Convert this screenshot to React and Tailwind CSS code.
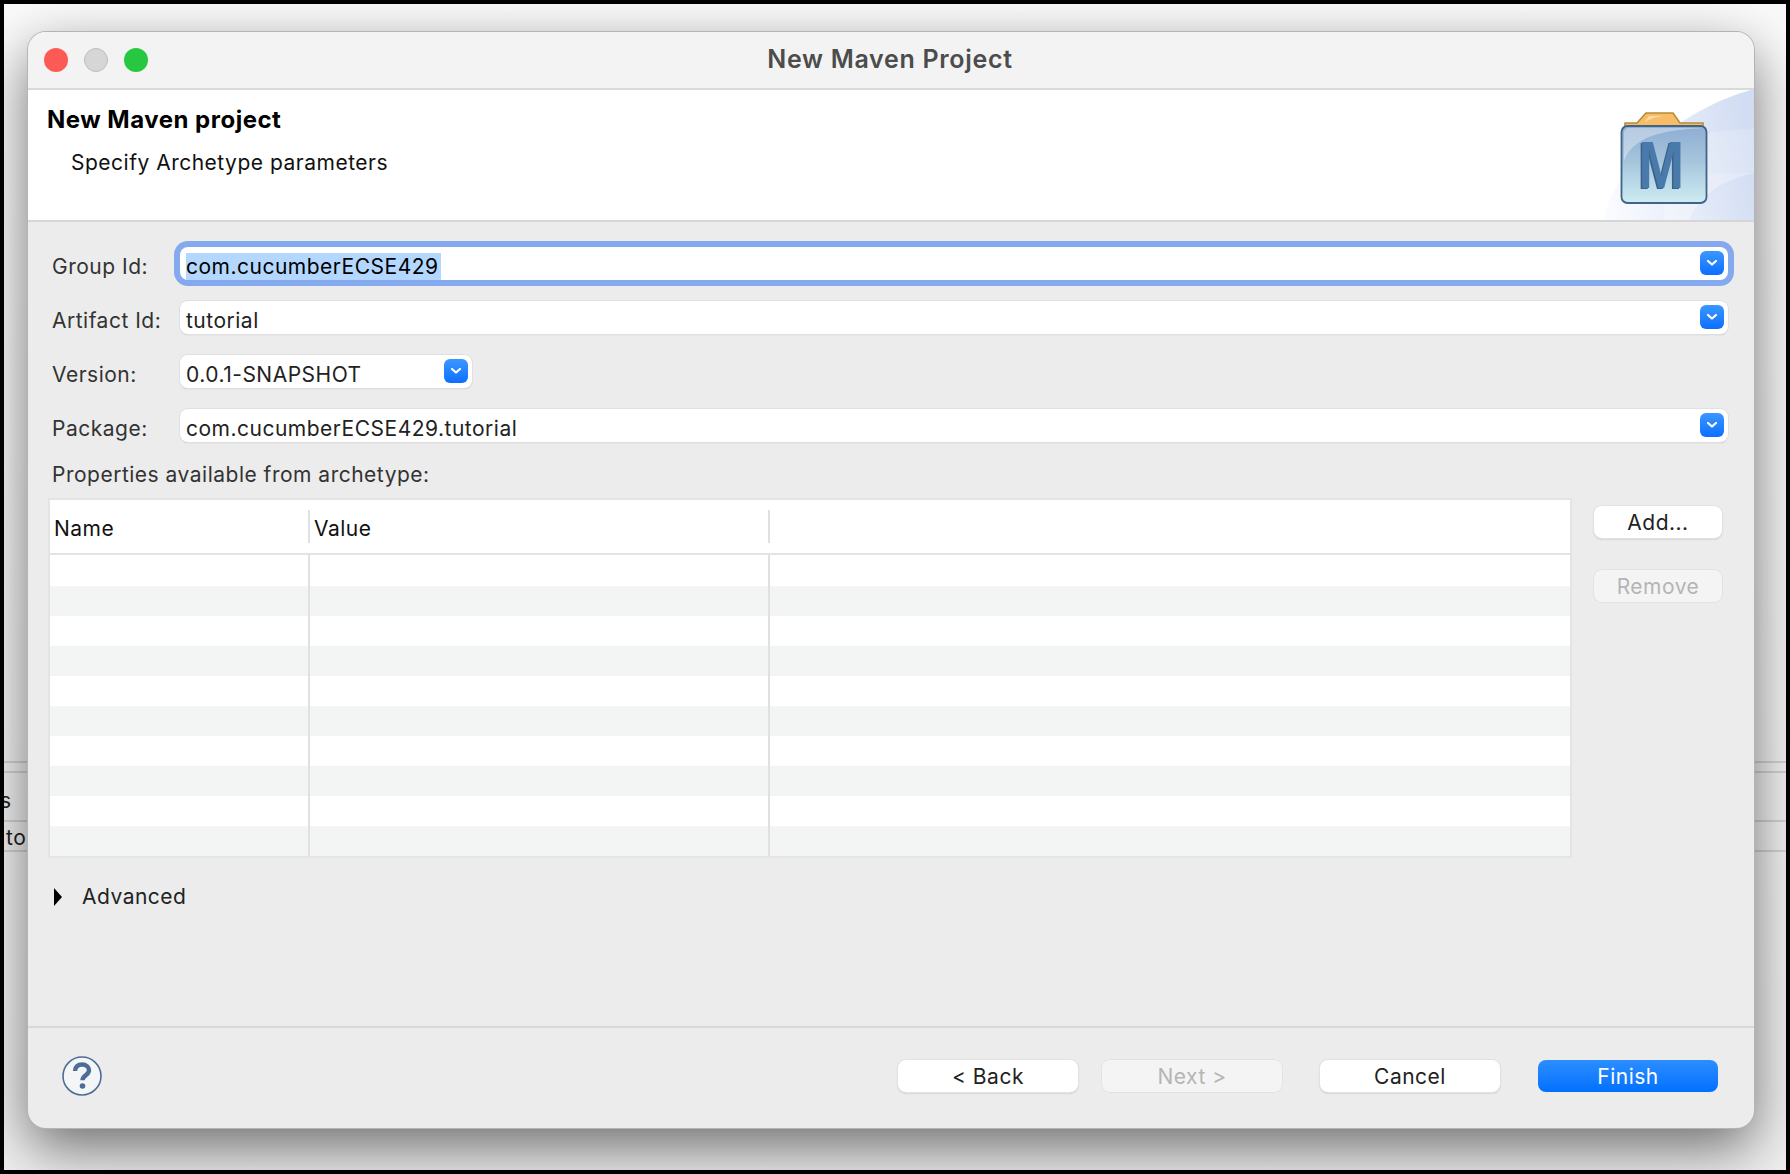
import React from "react";

const uiFont = "[font-family:Inter,'Noto_Sans',sans-serif]";

function Chevron() {
  return (
    <span className="flex h-6 w-6 shrink-0 items-center justify-center rounded-[6px] bg-gradient-to-b from-[#3a97ff] to-[#0a6eff]">
      <svg width="12" height="8" viewBox="0 0 12 8" fill="none">
        <path d="M2 2l4 3.5L10 2" stroke="#fff" strokeWidth="2.2" strokeLinecap="round" strokeLinejoin="round" />
      </svg>
    </span>
  );
}

function Combo({ value, focused, className = "" }) {
  return (
    <div
      className={`flex h-[33px] items-center justify-between rounded-[8px] bg-white pl-[6px] pr-1 ${
        focused
          ? "shadow-[0_0_0_6px_#84a9ee]"
          : "shadow-[0_0_0_1px_#e0e0e0,0_1px_1px_#b0b0b0]"
      } ${className}`}
    >
      <span className="relative top-[3px] text-[21px] leading-[27px] text-[#222]">
        {focused ? <span className="inline-block bg-[#b3d7ff] pr-[2px] text-black">{value}</span> : value}
      </span>
      <Chevron />
    </div>
  );
}

function FormRow({ label, children }) {
  return (
    <div className="flex h-[54px] items-center">
      <div className="relative top-[4px] w-[128px] shrink-0 text-[21px] text-[#333]">{label}</div>
      <div className="w-[1548px]">{children}</div>
    </div>
  );
}

function Button({ children, disabled, primary, className = "" }) {
  let look = "bg-white text-[#222] shadow-[0_0_0_1px_#e2e2e2,0_1px_2px_#aaa]";
  if (disabled) look = "bg-[#f4f4f4] text-[#b5b5b5] shadow-[0_0_0_1px_#e2e2e2]";
  if (primary) look = "bg-gradient-to-b from-[#2a8eff] to-[#0070ff] text-white";
  return (
    <div className={`flex items-center justify-center rounded-[8px] text-[21px] leading-none ${look} ${className}`}>
      {children}
    </div>
  );
}

function MavenLogo() {
  return (
    <svg width="90" height="96" viewBox="0 0 90 96">
      <defs>
        <linearGradient id="body" x1="0" y1="0" x2="0" y2="1">
          <stop offset="0" stopColor="#8fadd3" />
          <stop offset="0.45" stopColor="#a5c4dc" />
          <stop offset="1" stopColor="#cdecf2" />
        </linearGradient>
      </defs>
      <path d="M5 16V12H17L26 2H53L60 12H83V16Z" fill="#f6bd66" stroke="#b98a36" strokeWidth="1.6" />
      <path d="M24 12l5-7h14c-8 1-14 3-19 7Z" fill="#fbdca8" />
      <rect x="1.5" y="15" width="85" height="77" rx="6" fill="url(#body)" stroke="#3f6488" strokeWidth="1.8" />
      <path d="M4 50V22c0-3 2-5 5-5h74c-30 2-68 4-79 33Z" fill="#fff" opacity="0.35" />
      <text x="17" y="78" textLength="46" lengthAdjust="spacingAndGlyphs" fontFamily="Liberation Sans" fontWeight="700" fontSize="66" fill="#3c6288">M</text>
      <text x="18.500" y="77" textLength="46" lengthAdjust="spacingAndGlyphs" fontFamily="Liberation Sans" fontWeight="700" fontSize="66" fill="#4a79ab">M</text>
    </svg>
  );
}

function Swoosh() {
  return (
    <svg className="absolute bottom-0 right-0" width="150" height="131" viewBox="0 0 150 131">
      <defs>
        <linearGradient id="sw" x1="0" y1="0.7" x2="1" y2="0.5">
          <stop offset="0" stopColor="#fafbff" />
          <stop offset="1" stopColor="#d2ddf3" />
        </linearGradient>
      </defs>
      <path d="M0 131C6 85 70 22 150 0V131Z" fill="url(#sw)" />
      <path d="M66 52C90 45 120 41 150 40V84C125 84 100 84 62 86Z" fill="#fff" opacity="0.18" />
      <path d="M62 86C95 84 125 84 150 84C125 90 100 100 85 131H60Z" fill="#fff" opacity="0.3" />
    </svg>
  );
}

function HelpIcon() {
  return (
    <svg width="40" height="40" viewBox="0 0 40 40" fill="none">
      <circle cx="20" cy="20" r="19" fill="#f3f5f7" stroke="#4f6d94" strokeWidth="1.6" />
      <path d="M13 15c0-4 3-6.500 7-6.500s7 2.300 7 5.800c0 5-6.500 5-6.500 10" stroke="#4f6d94" strokeWidth="4.400" />
      <circle cx="20.500" cy="30" r="2.800" fill="#4f6d94" />
    </svg>
  );
}

export default function App() {
  const rows = [31, 30, 30, 30, 30, 30, 30, 30, 30, 30];

  return (
    <div className={`relative h-[1174px] w-[1790px] overflow-hidden border-4 border-black bg-gradient-to-b from-[#fafafa] to-[#f0f0f0] tracking-[0.5px] ${uiFont}`}>
      {/* app behind the dialog, only the edges show */}
      <div className="absolute inset-x-0 top-[757px] h-[10px] border-t-2 border-[#d4d4d4]" />
      <div className="absolute inset-x-0 top-[767px] h-[49px] border-t-2 border-[#d4d4d4] text-[21px] leading-[56px] text-[#222]">
        <span className="relative -left-[4px]">s</span>
      </div>
      <div className="absolute inset-x-0 top-[816px] h-[32px] border-y-2 border-[#d4d4d4] text-[21px] leading-[32px] text-[#222]">
        <span className="ml-[2px]">to</span>
      </div>

      <div className="relative ml-[24px] mt-[28px] flex h-[1096px] w-[1726px] flex-col overflow-hidden rounded-[18px] bg-[#ececec] shadow-[0_0_0_1px_#b4b4b4,0_20px_56px_rgba(0,0,0,0.55)]">
        <div className="flex h-[58px] shrink-0 items-center border-b-2 border-[#d9d9d9] bg-[#f3f3f3]">
          <div className="ml-[16px] flex gap-4">
            <span className="h-6 w-6 rounded-full bg-[#fc5b55]" />
            <span className="h-6 w-6 rounded-full border border-[#bdbdbd] bg-[#d6d6d6]" />
            <span className="h-6 w-6 rounded-full bg-[#27c83f]" />
          </div>
          <div className="flex-1 pr-[122px] text-center text-[25px] font-semibold tracking-[0.7px] text-[#4c4c4c]">New Maven Project</div>
        </div>

        <div className="relative flex h-[132px] shrink-0 border-b-2 border-[#d6d6d6] bg-white">
          <Swoosh />
          <div className="flex-1 pl-[19px] pt-[15px]">
            <div className="text-[24px] font-bold leading-[30px] text-black">New Maven project</div>
            <div className="ml-[24px] mt-[13px] text-[21px] leading-[30px] text-[#111]">Specify Archetype parameters</div>
          </div>
          <div className="relative mr-[44px] mt-[21px] h-[96px] w-[90px]">
            <MavenLogo />
          </div>
        </div>

        <div className="flex flex-1 flex-col pl-[24px]">
          <div className="mt-[14px]">
            <FormRow label="Group Id:">
              <Combo value="com.cucumberECSE429" focused />
            </FormRow>
            <FormRow label="Artifact Id:">
              <Combo value="tutorial" />
            </FormRow>
            <FormRow label="Version:">
              <Combo value="0.0.1-SNAPSHOT" className="w-[292px]" />
            </FormRow>
            <FormRow label="Package:">
              <Combo value="com.cucumberECSE429.tutorial" />
            </FormRow>
          </div>

          <div className="mt-[8px] text-[21px] leading-[30px] text-[#333]">Properties available from archetype:</div>

          <div className="mt-[8px] flex items-start">
            <div className="-ml-[4px] w-[1524px] border-2 border-[#e4e4e4] bg-white">
              <div className="flex h-[55px] border-b-2 border-[#e4e4e4] text-[21px] text-[#111]">
                <div className="flex w-[258px] items-center pl-[4px]">
                  <span className="relative top-[2px]">Name</span>
                </div>
                <div className="my-[10px] flex w-[462px] items-center border-x-2 border-[#e0e0e0] pl-[4px]">
                  <span className="relative top-[2px]">Value</span>
                </div>
              </div>
              {rows.map((h, i) => (
                <div key={i} style={{ height: h }} className={`flex ${i % 2 ? "bg-[#f3f5f5]" : "bg-white"}`}>
                  <div className="w-[258px]" />
                  <div className="w-[462px] border-x-2 border-[#e0e0e0]" />
                </div>
              ))}
            </div>
            <div className="ml-[22px] mt-[8px] flex flex-col gap-8">
              <Button className="h-[32px] w-[128px]">Add...</Button>
              <Button disabled className="h-[32px] w-[128px]">Remove</Button>
            </div>
          </div>

          <div className="mt-[24px] flex h-[30px] items-center">
            <svg className="ml-[1px]" width="10" height="18" viewBox="0 0 10 18">
              <path d="M1 0l8 9-8 9Z" fill="#000" />
            </svg>
            <span className="ml-[19px] text-[21px] text-[#222]">Advanced</span>
          </div>
        </div>

        <div className="flex h-[102px] shrink-0 items-start border-t-2 border-[#d8d8d8] pt-[32px]">
          <div className="ml-[34px] mt-[-4px]">
            <HelpIcon />
          </div>
          <Button className="ml-[796px] h-[32px] w-[180px]">&lt; Back</Button>
          <Button disabled className="ml-[24px] h-[32px] w-[180px]">Next &gt;</Button>
          <Button className="ml-[38px] h-[32px] w-[180px]">Cancel</Button>
          <Button primary className="ml-[38px] h-[32px] w-[180px]">Finish</Button>
        </div>
      </div>
    </div>
  );
}
